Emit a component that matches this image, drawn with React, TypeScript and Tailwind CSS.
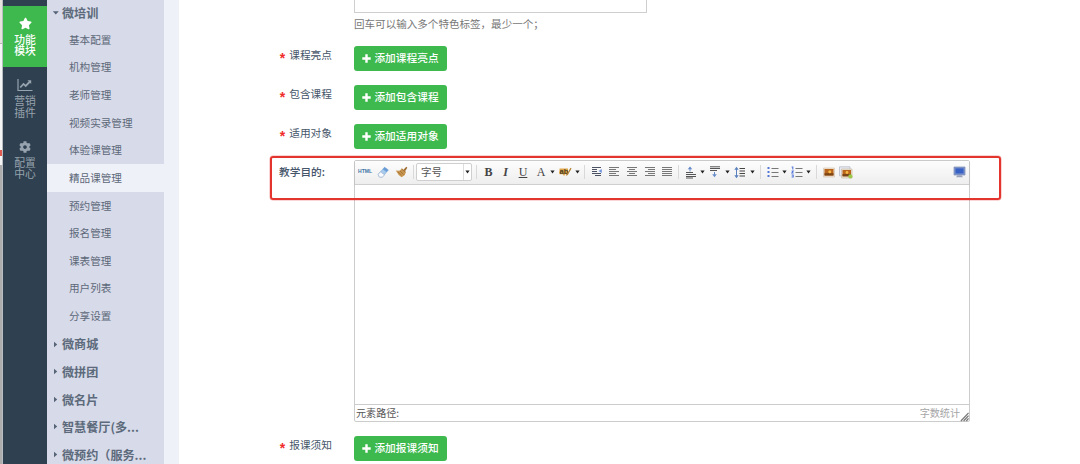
import type { ReactNode } from "react";
import { FaStar, FaCog } from "react-icons/fa";

const font = "font-['Noto_Sans_CJK_SC','Noto_Sans',sans-serif]";

const subItems = ["基本配置", "机构管理", "老师管理", "视频实录管理", "体验课管理", "精品课管理", "预约管理", "报名管理", "课表管理", "用户列表", "分享设置"];
const groups = ["微商城", "微拼团", "微名片", "智慧餐厅(多...", "微预约（服务..."];

function GroupRow({ label, open = false }: { label: string; open?: boolean }) {
  return (
    <div className="flex h-[27.62px] shrink-0 items-center pl-[5px] pt-[2px] text-[12.1px] font-bold text-[#5c6a7b]">
      <svg width="7" height="8" viewBox="0 0 7 8" className="mr-[3px] shrink-0" fill="#566476">
        {open ? <path d="M.8 2.2h6L3.8 5.6z" /> : <path d="M2 .8v5.4L5.2 3.5z" />}
      </svg>
      <span className="whitespace-nowrap">{label}</span>
    </div>
  );
}

function NavItem({ icon, lines, active = false }: { icon: ReactNode; lines: [string, string]; active?: boolean }) {
  return (
    <div className={`flex h-[61.6px] flex-col items-center pt-[11px] text-[10.8px] leading-[11.8px] ${active ? "bg-[#3eb94e] font-medium text-white" : "text-[#97a3ae]"}`}>
      <div className="mb-[3px] flex h-[14px] items-center">{icon}</div>
      <span>{lines[0]}</span>
      <span>{lines[1]}</span>
    </div>
  );
}

function ChartIcon() {
  return (
    <svg width="16" height="14" viewBox="0 0 16 14" fill="none" stroke="currentColor">
      <path d="M1 1v11.5h14.5" strokeWidth="1.2" />
      <path d="M3.2 9.5l3.3-3.6 2.2 2L13 3.5" strokeWidth="1.8" />
      <path d="M10.5 2.2h3.7v3.7z" fill="currentColor" stroke="none" />
    </svg>
  );
}

function Field({ label, height }: { label: string; height: string }) {
  return (
    <div className={`flex items-start ${height}`}>
      <div className="flex h-[19px] w-[175px] items-center justify-end pr-[22px] text-[10.7px] text-[#46566a]">
        <span className="mr-[4px] pt-[4px] font-['Liberation_Sans',sans-serif] text-[14px] font-bold leading-none text-[#f02b2b]">*</span>
        {label}
      </div>
      <button className="flex h-[25px] w-[93px] items-center justify-center gap-[3px] rounded-[3px] bg-[#3eb94e] text-[10.7px] font-medium text-white">
        <svg width="9" height="9" viewBox="0 0 9 9"><path d="M4.5.3v8.4M.3 4.5h8.4" stroke="currentColor" strokeWidth="2.4" /></svg>
        <span className="whitespace-nowrap">添加{label}</span>
      </button>
    </div>
  );
}

function Slot({ w, children }: { w: string; children: ReactNode }) {
  return <div className={`flex h-full shrink-0 items-center justify-center ${w}`}>{children}</div>;
}
function Sep({ w }: { w: string }) {
  return <Slot w={w}><div className="h-[14px] w-px bg-[#d9d9d9]" /></Slot>;
}
function Caret({ w }: { w: string }) {
  return <Slot w={w}><svg width="5" height="4" viewBox="0 0 5 4" className="shrink-0"><path d="M.4.5h4.2L2.5 3.4z" fill="#222" /></svg></Slot>;
}
function Bars({ d }: { d: string }) {
  return <svg width="12" height="12" viewBox="0 0 12 12"><path d={d} stroke="#777" strokeWidth="1.1" fill="none" /></svg>;
}

function Toolbar() {
  return (
    <div className="flex h-[24px] items-center border-b border-[#cfcfcf] bg-gradient-to-b from-[#fdfdfd] to-[#eeeeee] pb-px pl-px pr-[3px] shadow-[0_1px_2px_rgba(0,0,0,0.12)]">
      <Slot w="w-[18px]"><span className="font-['Liberation_Sans',sans-serif] text-[5px] font-bold text-[#3e75a5]">HTML</span></Slot>
      <Slot w="w-[19px]">
        <svg width="13" height="13" viewBox="0 0 13 13">
          <path d="M1.2 8.4L7.5 1.3l3.8 2.6-6 7.3-3-.3z" fill="#a9cbed" stroke="#85aed6" strokeWidth=".7" />
          <path d="M1.2 8.4l2.3-2.5 3.9 2.9-2.1 2.4-3-.3z" fill="#f9fbff" stroke="#a4b4ca" strokeWidth=".6" />
          <path d="M7.5 1.3l3.8 2.6-1.8 2.2-3.7-2.8z" fill="#6a9dd6" />
        </svg>
      </Slot>
      <Slot w="w-[17px]">
        <svg width="13" height="12" viewBox="0 0 13 12">
          <path d="M8 4.2L11.3.8l1 .9-2.6 4z" fill="#9b6a30" />
          <path d="M.8 4.4l3.5.4 2.9-2.2 3.6 3.2-.9 3.1-3.3 2.3-2.9-2.2z" fill="#c99650" />
          <path d="M6.4 2.8l4.2 3.5M3 6l3.4 3M5 5l3.5 3.4" stroke="#96692f" strokeWidth=".7" />
        </svg>
      </Slot>
      <Sep w="w-[6px]" />
      <div className="flex h-[18px] w-[56px] shrink-0 items-center rounded-[2px] border border-[#cfcfcf] bg-white text-[10.5px] text-[#555]">
        <span className="flex-1 pl-[4px]">字号</span>
        <span className="flex h-full w-[8px] items-center justify-center border-l border-[#ddd]"><Caret w="w-[5px]" /></span>
      </div>
      <Sep w="w-[8px]" />
      <div className="flex h-full items-center font-['Liberation_Serif',serif] text-[12px] leading-none text-[#444]">
        <Slot w="w-[17px]"><b>B</b></Slot>
        <Slot w="w-[17px]"><b className="italic">I</b></Slot>
        <Slot w="w-[18px]"><span className="underline">U</span></Slot>
        <Slot w="w-[18px]"><span>A</span></Slot>
      </div>
      <Caret w="w-[5px]" />
      <Slot w="w-[20px]">
        <svg width="13" height="12" viewBox="0 0 13 12">
          <path d="M.5 2.5h8.5v5.5l-3 .2-.9 2-1.3-2H.5z" fill="#e0a84b" />
          <text x=".6" y="7.6" fontSize="7.5" fontWeight="bold" fontFamily="Liberation Sans" fill="#4a3b20">ab</text>
          <path d="M12 2.2L8.3 8.5l-1.2.8" stroke="#b58335" strokeWidth="1.3" fill="none" />
        </svg>
      </Slot>
      <Caret w="w-[5px]" />
      <Sep w="w-[9px]" />
      <Slot w="w-[16px]">
        <svg width="12" height="12" viewBox="0 0 12 12" fill="none">
          <path d="M1 1.5h9M1 3.5h5M1 5.5h5M1 7.5h9M4 9.5h6" stroke="#4b5264" strokeWidth="1.2" />
          <path d="M10.8 2.9v4L7.5 4.9z" fill="#7094db" />
        </svg>
      </Slot>
      <Slot w="w-[18px]"><Bars d="M1 1.5h10M1 3.5h7M1 5.5h10M1 7.5h7M1 9.5h10" /></Slot>
      <Slot w="w-[18px]"><Bars d="M1 1.5h10M3 3.5h6M1 5.5h10M3 7.5h6M1 9.5h10" /></Slot>
      <Slot w="w-[17px]"><Bars d="M1 1.5h10M4 3.5h7M1 5.5h10M4 7.5h7M1 9.5h10" /></Slot>
      <Slot w="w-[18px]"><Bars d="M1 1.5h10M1 3.5h10M1 5.5h10M1 7.5h10M1 9.5h10" /></Slot>
      <Sep w="w-[4px]" />
      <Slot w="w-[21px]">
        <svg width="12" height="13" viewBox="0 0 12 13" fill="none">
          <path d="M5 1.5v4" stroke="#668bc9" /><path d="M5 .6l2.3 2.7H2.7z" fill="#668bc9" />
          <path d="M1 6.5h7M1 8.5h10M1 10.5h10M1 12h7" stroke="#555" />
        </svg>
      </Slot>
      <Caret w="w-[3px]" />
      <Slot w="w-[22px]">
        <svg width="12" height="13" viewBox="0 0 12 13" fill="none">
          <path d="M1 .8h10M1 2.5h10M1 4.5h7" stroke="#555" />
          <path d="M5.5 6v4" stroke="#668bc9" /><path d="M5.5 11.2L3.2 8.2h4.6z" fill="#668bc9" />
        </svg>
      </Slot>
      <Caret w="w-[3px]" />
      <Slot w="w-[22px]">
        <svg width="12" height="13" viewBox="0 0 12 13" fill="none">
          <path d="M2.5 2v9" stroke="#5b80be" /><path d="M2.5.8l2.2 2.9H.3zM2.5 12.2l2.2-2.9H.3z" fill="#5b80be" />
          <path d="M5.5 2.5H11M5.5 5H11M5.5 7.5H11M5.5 10H11" stroke="#444" strokeWidth="1.2" />
        </svg>
      </Slot>
      <Caret w="w-[3px]" />
      <Sep w="w-[12px]" />
      <Slot w="w-[14px]">
        <svg width="12" height="12" viewBox="0 0 12 12" fill="none">
          <path d="M.5 2h2M.5 6h2M.5 10h2" stroke="#5577dc" strokeWidth="1.9" />
          <path d="M4.5 2.5h7M4.5 6.5h7M4.5 10.5h7" stroke="#777" />
        </svg>
      </Slot>
      <Caret w="w-[8px]" />
      <Slot w="w-[18px]">
        <svg width="12" height="12" viewBox="0 0 12 12" fill="none">
          <path d="M.6 1h1.2v2.4M.6 5h1.6L.8 7h1.8M.6 9h1.6v2H.6" stroke="#5577dc" strokeWidth="1.1" />
          <path d="M4.5 2.5h7M4.5 6.5h7M4.5 10.5h7" stroke="#777" />
        </svg>
      </Slot>
      <Caret w="w-[4px]" />
      <Sep w="w-[12px]" />
      <Slot w="w-[14px]">
        <svg width="12" height="11" viewBox="0 0 12 11">
          <path d="M.5 1h11v9H.5z" fill="#eee2d2" stroke="#d4c5b4" strokeWidth=".7" />
          <path d="M1.5 2h9v6.5h-9z" fill="#b9651c" /><path d="M1.5 6.2h9v2.3h-9z" fill="#7c4515" /><circle cx="6.8" cy="4.8" r="1.5" fill="#f4bb48" />
        </svg>
      </Slot>
      <Slot w="w-[20px]">
        <svg width="14" height="13" viewBox="0 0 14 13">
          <path d="M.5.8h10.5v9H.5z" fill="#e8e8ee" stroke="#b9bdca" strokeWidth=".8" />
          <path d="M2.5 3h10.5v9H2.5z" fill="#eee2d2" stroke="#c7baa9" strokeWidth=".7" />
          <path d="M3.5 4h8.5v6h-8.5z" fill="#b9651c" /><path d="M3.5 8h8.5v2.5h-8.5z" fill="#7c4515" /><circle cx="8" cy="6.5" r="1.4" fill="#f4bb48" />
          <circle cx="11.4" cy="10.4" r="2.1" fill="#9cc94a" />
        </svg>
      </Slot>
      <div className="ml-auto">
        <svg width="13" height="12" viewBox="0 0 13 12">
          <path d="M1 1h11v8H1z" fill="#7890cc" stroke="#8794b5" strokeWidth=".8" /><path d="M2.5 2.4h8v5h-8z" fill="#3861c5" />
          <path d="M4.5 9.2h4l1.5 2H3z" fill="#99a2b8" />
        </svg>
      </div>
    </div>
  );
}

export default function App() {
  return (
    <div className={`relative flex h-[464px] w-[1080px] overflow-hidden bg-white ${font}`}>
      <div className="flex w-[3px] shrink-0 flex-col border-r border-[#b9bcc0]">
        <div className="h-[43px] bg-[#e6e3df]" />
        <div className="h-px bg-[#b9b6b2]" />
        <div className="h-[106px] bg-[#f5f5f5]" />
        <div className="h-[6px] bg-[#df5a50]" />
        <div className="h-[9px] bg-[#f5f5f5]" />
        <div className="flex-1 bg-[#adadad]" />
      </div>
      <nav className="w-[44px] shrink-0 bg-[#2f4050] pt-[5.5px]">
        <NavItem active icon={<FaStar size={13} />} lines={["功能", "模块"]} />
        <NavItem icon={<ChartIcon />} lines={["营销", "插件"]} />
        <NavItem icon={<FaCog size={12} />} lines={["配置", "中心"]} />
      </nav>
      <aside className="w-[132px] shrink-0 bg-[#eff1f8]">
        <div className="-mt-[1.6px] flex w-[117px] flex-col bg-[#d7dae9]">
          <GroupRow label="微培训" open />
          {subItems.map((s) => (
            <div key={s} className={`flex h-[27.62px] shrink-0 items-center pl-[22px] text-[10.6px] text-[#5c6878] ${s === "精品课管理" ? "bg-[#eff1f8]" : ""}`}>{s}</div>
          ))}
          {groups.map((g) => <GroupRow key={g} label={g} />)}
        </div>
      </aside>
      <main className="flex flex-1 flex-col">
        <div className="ml-[175px] h-[12.5px] w-[293px] shrink-0 border border-t-0 border-[#cfcfcf]" />
        <div className="ml-[175px] flex h-[33.5px] shrink-0 items-start pt-[3.5px] text-[10.55px] leading-[16px] text-[#777]">回车可以输入多个特色标签，最少一个；</div>
        <Field label="课程亮点" height="h-[39px]" />
        <Field label="包含课程" height="h-[39px]" />
        <Field label="适用对象" height="h-[36px]" />
        <div className="flex h-[276px] shrink-0 items-start">
          <div className="w-[175px] pl-[100px] pt-[4px] text-[10.7px] font-medium leading-[16px] text-[#46566a]">教学目的:</div>
          <div className="flex h-[262px] w-[616px] flex-col rounded-[2px] border border-[#cccccc]">
            <Toolbar />
            <div className="flex-1 bg-white" />
            <div className="flex h-[17px] items-center justify-between border-t border-[#cccccc] pl-[1px] text-[10.1px] leading-none text-[#555]">
              <span>元素路径:</span>
              <span className="flex items-center text-[#a5a5a5]">
                字数统计
                <svg width="9" height="11" viewBox="0 0 10 11" className="translate-y-[3px]"><path d="M1 10.5l8.5-9M4 10.5l5.5-6M7 10.5l2.5-3" stroke="#777" strokeWidth="1.4" /></svg>
              </span>
            </div>
          </div>
        </div>
        <Field label="报课须知" height="h-[28px]" />
      </main>
      <div className="pointer-events-none absolute left-[270px] top-[156px] h-[44px] w-[731px] rounded-[3px] border-[2.5px] border-[#e3352d] ring-[0.5px] ring-[#e3352d]/40" />
    </div>
  );
}
